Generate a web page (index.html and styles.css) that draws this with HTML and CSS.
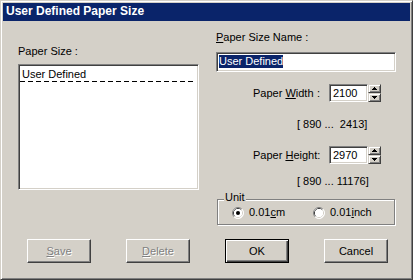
FILE: index.html
```html
<!DOCTYPE html>
<html>
<head>
<meta charset="utf-8">
<title>User Defined Paper Size</title>
<link rel="stylesheet" href="styles.css">
</head>
<body>
<div class="window">
  <div class="titlebar">User Defined Paper Size</div>
  <div class="client">
    <div class="top">
      <div class="leftcol">
        <div class="label">Paper Size :</div>
        <div class="listbox">
          <div class="item">User Defined</div>
        </div>
      </div>
      <div class="rightcol">
        <div class="label"><u>P</u>aper Size Name :</div>
        <div class="textbox"><span class="sel">User Defined</span></div>

        <div class="spinrow first">
          <div class="spinlabel"><span>Paper <u>W</u>idth</span><span>:</span></div>
          <div class="edit">2100</div>
          <div class="spin">
            <div class="spinbtn"><svg width="5" height="3" viewBox="0 0 5 3" shape-rendering="crispEdges"><rect x="2" y="0" width="1" height="1"/><rect x="1" y="1" width="3" height="1"/><rect x="0" y="2" width="5" height="1"/></svg></div>
            <div class="spinbtn"><svg width="5" height="3" viewBox="0 0 5 3" shape-rendering="crispEdges"><rect x="0" y="0" width="5" height="1"/><rect x="1" y="1" width="3" height="1"/><rect x="2" y="2" width="1" height="1"/></svg></div>
          </div>
        </div>
        <div class="range range1">[ 890 ...  2413]</div>

        <div class="spinrow second">
          <div class="spinlabel"><span>Paper <u>H</u>eight</span><span>:</span></div>
          <div class="edit">2970</div>
          <div class="spin">
            <div class="spinbtn"><svg width="5" height="3" viewBox="0 0 5 3" shape-rendering="crispEdges"><rect x="2" y="0" width="1" height="1"/><rect x="1" y="1" width="3" height="1"/><rect x="0" y="2" width="5" height="1"/></svg></div>
            <div class="spinbtn"><svg width="5" height="3" viewBox="0 0 5 3" shape-rendering="crispEdges"><rect x="0" y="0" width="5" height="1"/><rect x="1" y="1" width="3" height="1"/><rect x="2" y="2" width="1" height="1"/></svg></div>
          </div>
        </div>
        <div class="range range2">[ 890 ... 11176]</div>

        <div class="group">
          <span class="legend">Unit</span>
          <div class="radios">
            <div class="radio">
              <svg width="12" height="12" viewBox="0 0 12 12">
                <circle cx="6" cy="6" r="5.5" fill="#fff"/>
                <path d="M2.11 9.89 A5.5 5.5 0 0 1 9.89 2.11" fill="none" stroke="#808080"/>
                <path d="M9.89 2.11 A5.5 5.5 0 0 1 2.11 9.89" fill="none" stroke="#ffffff"/>
                <path d="M2.82 9.18 A4.5 4.5 0 0 1 9.18 2.82" fill="none" stroke="#404040"/>
                <path d="M9.18 2.82 A4.5 4.5 0 0 1 2.82 9.18" fill="none" stroke="#d4d0c8"/>
                <circle cx="6" cy="6" r="4" fill="#fff"/>
                <circle cx="6" cy="6" r="2" fill="#000"/>
              </svg>
              <span>0.01<u>c</u>m</span>
            </div>
            <div class="radio">
              <svg width="12" height="12" viewBox="0 0 12 12">
                <circle cx="6" cy="6" r="5.5" fill="#fff"/>
                <path d="M2.11 9.89 A5.5 5.5 0 0 1 9.89 2.11" fill="none" stroke="#808080"/>
                <path d="M9.89 2.11 A5.5 5.5 0 0 1 2.11 9.89" fill="none" stroke="#ffffff"/>
                <path d="M2.82 9.18 A4.5 4.5 0 0 1 9.18 2.82" fill="none" stroke="#404040"/>
                <path d="M9.18 2.82 A4.5 4.5 0 0 1 2.82 9.18" fill="none" stroke="#d4d0c8"/>
                <circle cx="6" cy="6" r="4" fill="#fff"/>
              </svg>
              <span>0.01<u>i</u>nch</span>
            </div>
          </div>
        </div>
      </div>
    </div>

    <div class="buttons">
      <div class="btn disabled"><span><u>S</u>ave</span></div>
      <div class="btn disabled"><span><u>D</u>elete</span></div>
      <div class="btn default"><span>OK</span></div>
      <div class="btn"><span>Cancel</span></div>
    </div>
  </div>
</div>
</body>
</html>
```

FILE: styles.css
```css
* { box-sizing: border-box; }

html, body {
  margin: 0;
  padding: 0;
  background: #d4d0c8;
}

body {
  font-family: "Liberation Sans", Arial, sans-serif;
  font-size: 11px;
  line-height: 13px;
  color: #000;
}

u { text-decoration: underline; text-underline-offset: 1px; }

.window {
  width: 413px;
  height: 280px;
  border: 1px solid;
  border-color: #d4d0c8 #404040 #404040 #d4d0c8;
  box-shadow: inset 1px 1px 0 #fff, inset -1px -1px 0 #808080;
  padding: 2px;
  display: flex;
  flex-direction: column;
  background: #d4d0c8;
}

.titlebar {
  height: 18px;
  flex: none;
  background: #0a246a;
  color: #fff;
  font-weight: bold;
  font-size: 12px;
  line-height: 16px;
  padding-left: 3px;
  white-space: nowrap;
}

.client {
  flex: 1;
  display: flex;
  flex-direction: column;
}

.top {
  display: flex;
}

.leftcol {
  margin-left: 15px;
  width: 181px;
  padding-top: 24px;
}

.label {
  height: 13px;
  white-space: nowrap;
}

.listbox {
  margin-top: 6px;
  width: 181px;
  height: 126px;
  background: #fff;
  border: 1px solid;
  border-color: #808080 #fff #fff #808080;
  box-shadow: inset 1px 1px 0 #404040, inset -1px -1px 0 #d4d0c8;
  padding: 1px;
}

.item {
  padding: 2px 0 1px 2px;
  height: 17px;
  border-bottom: 1px solid transparent;
  background-image: repeating-linear-gradient(to right, #000 0 5px, transparent 5px 8px);
  background-size: 100% 1px;
  background-repeat: no-repeat;
  background-position: left bottom;
  margin-right: 2px;
  white-space: nowrap;
}

.rightcol {
  margin-left: 17px;
  width: 180px;
  padding-top: 10px;
  display: flex;
  flex-direction: column;
}

.textbox {
  margin-top: 8px;
  width: 180px;
  height: 20px;
  background: #fff;
  border: 1px solid;
  border-color: #808080 #fff #fff #808080;
  box-shadow: inset 1px 1px 0 #404040, inset -1px -1px 0 #d4d0c8;
  padding: 2px 0 0 2px;
}

.sel {
  display: inline-block;
  background: #0a246a;
  color: #fff;
  line-height: 13px;
  height: 13px;
  white-space: nowrap;
}

.spinrow {
  display: flex;
  align-items: center;
  padding-left: 37px;
  height: 18px;
}

.spinrow.first { margin-top: 12px; }
.spinrow.second { margin-top: 15px; }

.spinlabel {
  width: 76px;
  display: flex;
  justify-content: space-between;
  padding-right: 9px;
  white-space: nowrap;
}

.edit {
  width: 39px;
  height: 18px;
  background: #fff;
  border: 1px solid;
  border-color: #808080 #fff #fff #808080;
  box-shadow: inset 1px 1px 0 #404040, inset -1px -1px 0 #d4d0c8;
  padding: 2px 0 0 3px;
}

.spin {
  width: 13px;
  height: 18px;
  display: flex;
  flex-direction: column;
}

.spinbtn {
  height: 9px;
  display: flex;
  align-items: center;
  justify-content: center;
  background: #d4d0c8;
  border: 1px solid;
  border-color: #d4d0c8 #404040 #404040 #d4d0c8;
  box-shadow: inset 1px 1px 0 #fff, inset -1px -1px 0 #808080;
}

.spinbtn svg { display: block; fill: #000; }

.range {
  padding-left: 81px;
  height: 13px;
  white-space: pre;
}

.range1 { margin-top: 16px; }
.range2 { margin-top: 11px; }

.group {
  position: relative;
  margin-top: 11px;
  margin-left: 1px;
  width: 178px;
  height: 26px;
  border: 1px solid #808080;
  box-shadow: 1px 1px 0 #fff, inset 1px 1px 0 #fff;
}

.legend {
  position: absolute;
  top: -9px;
  left: 6px;
  padding: 0 1px 0 1px;
  background: #d4d0c8;
  line-height: 13px;
}

.radios {
  display: flex;
  padding: 6px 0 0 14px;
}

.radio {
  width: 88px;
  height: 13px;
  display: flex;
  align-items: center;
  gap: 5px;
  white-space: nowrap;
}

.radio svg { display: block; flex: none; }

.buttons {
  margin-top: 14px;
  padding-left: 24px;
  display: flex;
  gap: 35px;
}

.btn {
  width: 64px;
  height: 24px;
  display: flex;
  align-items: center;
  justify-content: center;
  border: 1px solid;
  border-color: #fff #404040 #404040 #fff;
  box-shadow: inset -1px -1px 0 #808080;
  background: #d4d0c8;
  white-space: nowrap;
}

.btn.default {
  border: 1px solid #000;
  box-shadow: inset 1px 1px 0 #fff, inset -1px -1px 0 #404040, inset -2px -2px 0 #808080;
}

.btn.disabled {
  color: #808080;
  text-shadow: 1px 1px 0 #fff;
}
```
